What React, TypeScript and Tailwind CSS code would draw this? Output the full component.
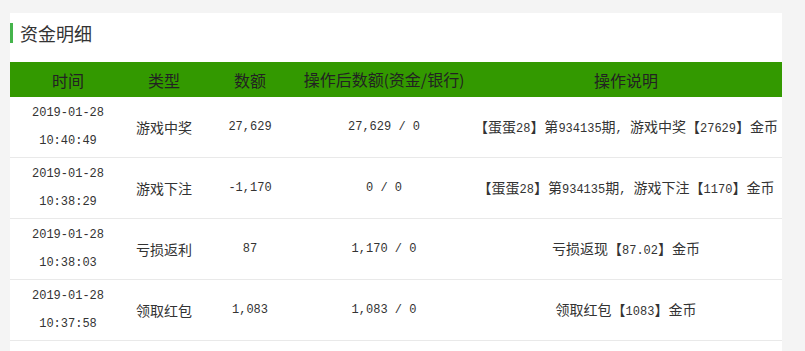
import { Fragment } from "react";

interface Record {
  date: string;
  time: string;
  type: string;
  amount: string;
  after: string;
  note: string;
}

const records: Record[] = [
  {
    date: "2019-01-28",
    time: "10:40:49",
    type: "游戏中奖",
    amount: "27,629",
    after: "27,629 / 0",
    note: "【蛋蛋28】第934135期, 游戏中奖【27629】金币",
  },
  {
    date: "2019-01-28",
    time: "10:38:29",
    type: "游戏下注",
    amount: "-1,170",
    after: "0 / 0",
    note: "【蛋蛋28】第934135期, 游戏下注【1170】金币",
  },
  {
    date: "2019-01-28",
    time: "10:38:03",
    type: "亏损返利",
    amount: "87",
    after: "1,170 / 0",
    note: "亏损返现【87.02】金币",
  },
  {
    date: "2019-01-28",
    time: "10:37:58",
    type: "领取红包",
    amount: "1,083",
    after: "1,083 / 0",
    note: "领取红包【1083】金币",
  },
];

// ascii runs get the narrow mono face, like the half-width digits of the original
const Mixed = ({ text }: { text: string }) => {
  const parts = text.split(/([\x20-\x7E]+)/).filter((p) => p !== "");
  return (
    <>
      {parts.map((part, i) =>
        /^[\x20-\x7E]+$/.test(part) ? (
          <span
            key={i}
            className="font-['Liberation_Mono',monospace] text-[12px] whitespace-pre"
          >
            {part}
          </span>
        ) : (
          <Fragment key={i}>{part}</Fragment>
        )
      )}
    </>
  );
};

const cols = "grid grid-cols-[116px_76px_96px_172px_312px]";

export default function App() {
  return (
    <div className="min-h-[351px] bg-[#f4f4f4] pt-[13px] pl-[10px] font-['Noto_Sans_CJK_SC',sans-serif]">
      <div className="w-[772px] bg-white pb-[20px]">
        <div className="flex h-[49px] items-start pt-[10px]">
          <div className="flex h-[20px] items-center border-l-[3px] border-[#45b44c] pl-[7px] text-[18px] leading-[20px] text-[#333]">
            资金明细
          </div>
        </div>

        <div
          className={`${cols} h-[35px] items-center bg-[#339900] text-center text-[16px] leading-[20px] text-[#222]`}
        >
          <div>时间</div>
          <div>类型</div>
          <div>数额</div>
          <div>
            操作后数额<span className="text-[15px]">(</span>资金/银行
            <span className="text-[15px]">)</span>
          </div>
          <div>操作说明</div>
        </div>

        {records.map((r, i) => (
          <div
            key={i}
            className={`${cols} h-[61px] items-center border-b border-[#e9e9e9] text-center text-[14px] leading-[28px] text-[#333]`}
          >
            <div className="flex flex-col font-['Liberation_Mono',monospace] text-[12px] leading-[28px]">
              <span>{r.date}</span>
              <span>{r.time}</span>
            </div>
            <div>{r.type}</div>
            <div className="font-['Liberation_Mono',monospace] text-[12px]">
              {r.amount}
            </div>
            <div className="font-['Liberation_Mono',monospace] text-[12px] whitespace-pre">
              {r.after}
            </div>
            <div className="whitespace-nowrap">
              <Mixed text={r.note} />
            </div>
          </div>
        ))}
      </div>
    </div>
  );
}
